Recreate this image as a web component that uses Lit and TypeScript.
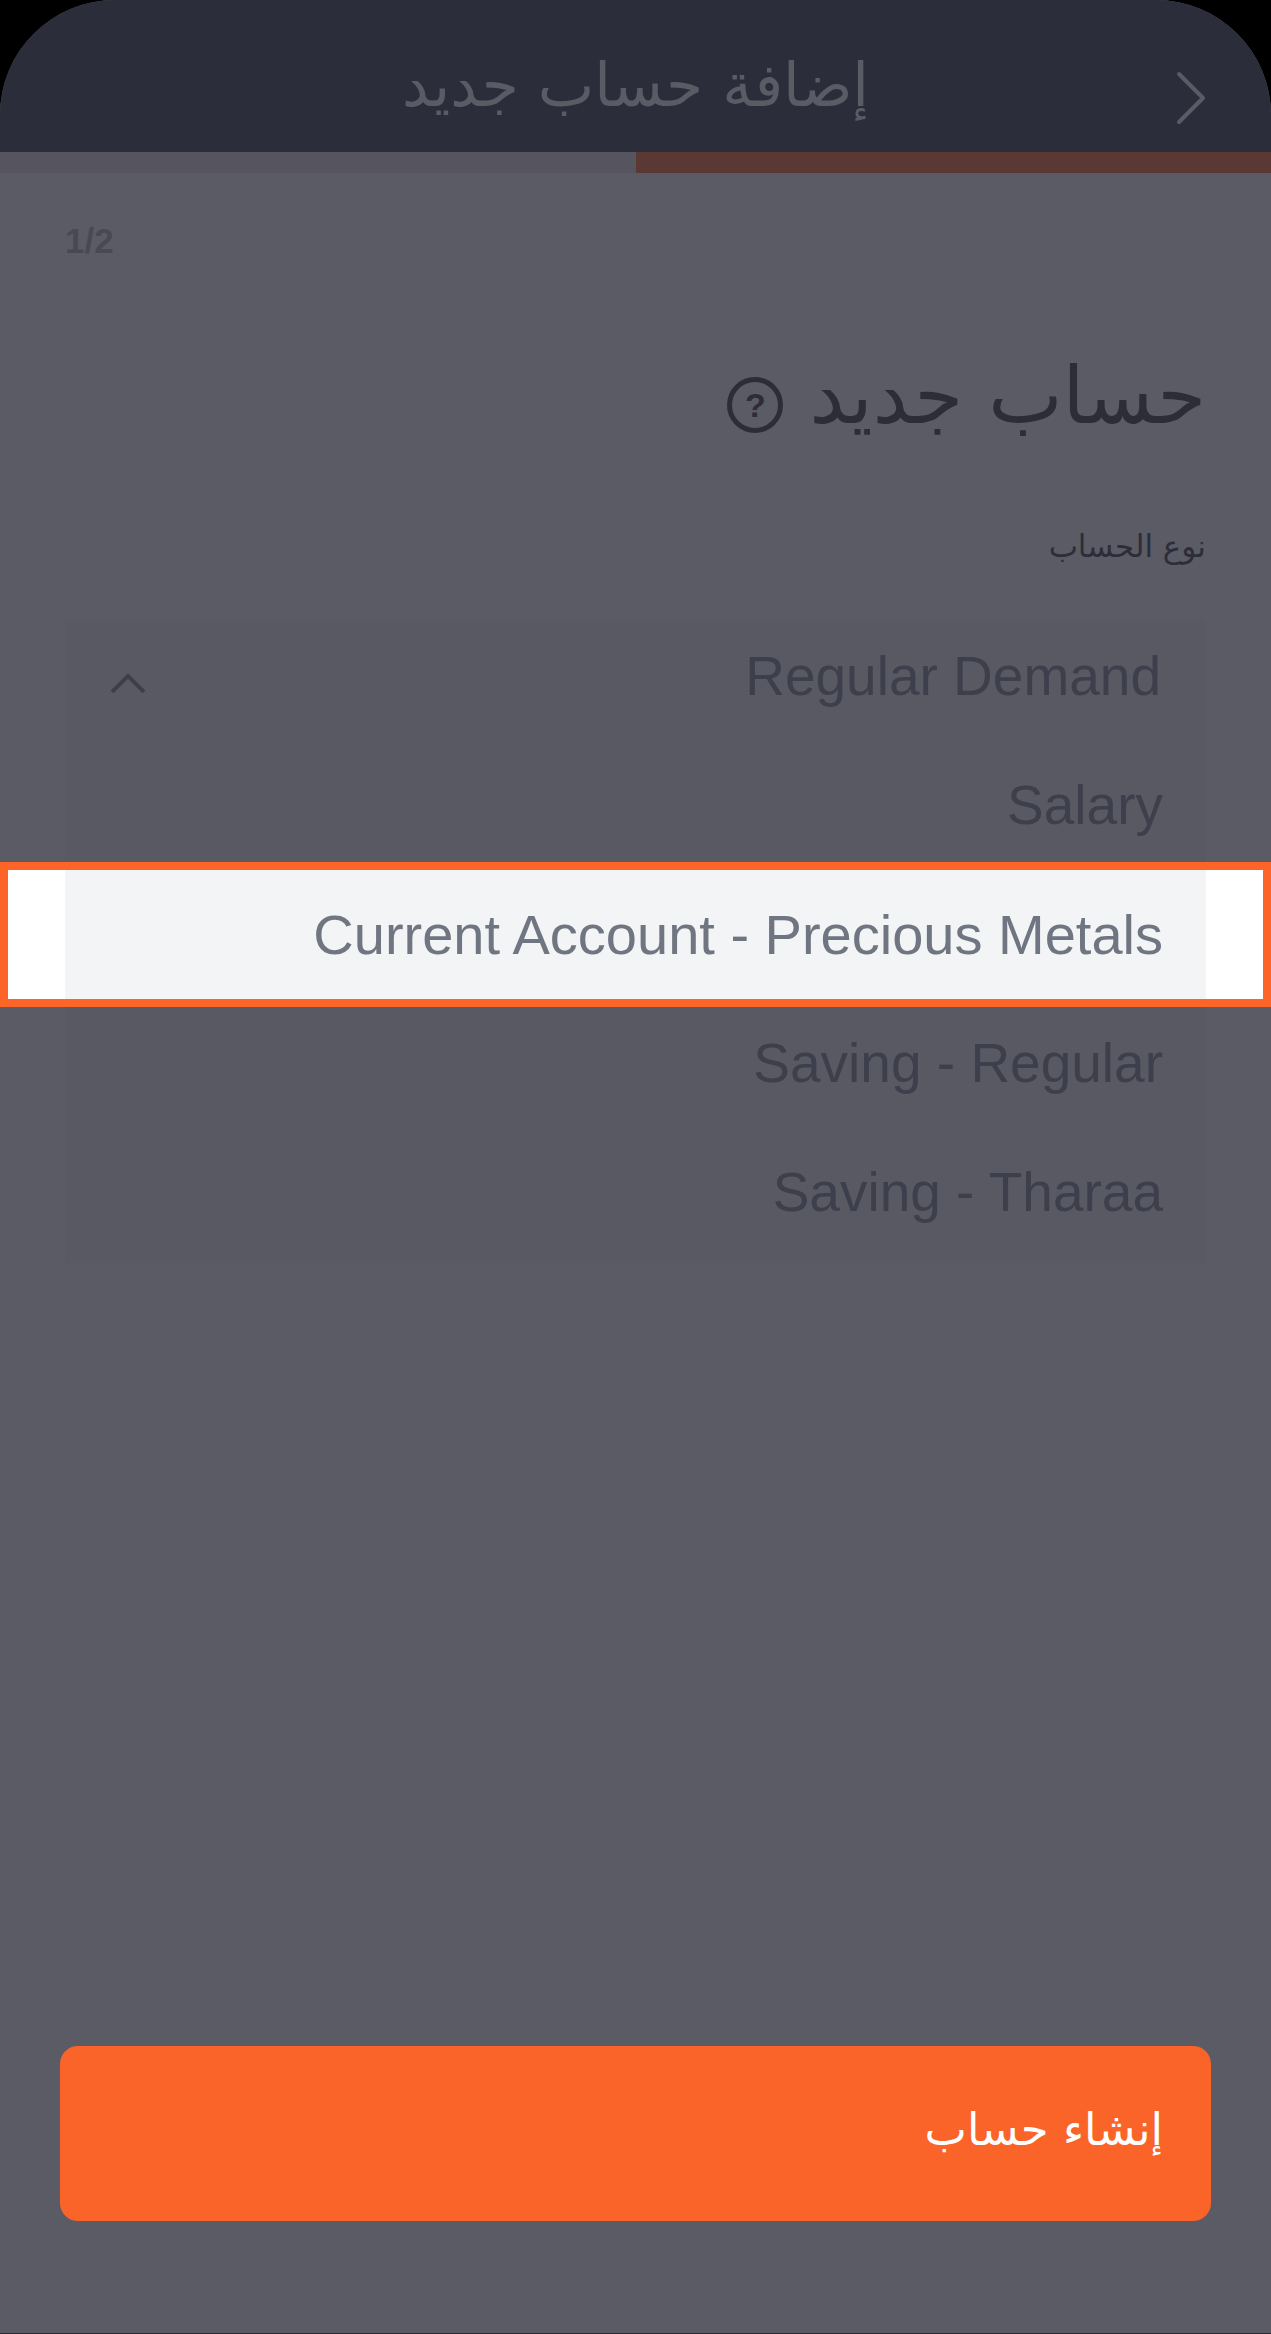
import { LitElement, html, css } from "lit";
import { customElement, state } from "lit/decorators.js";
import { classMap } from "lit/directives/class-map.js";

const ACCOUNT_TYPES = [
  "Salary",
  "Current Account - Precious Metals",
  "Saving - Regular",
  "Saving - Tharaa",
];

@customElement("account-type-picker")
export class AccountTypePicker extends LitElement {
  static styles = css`
    :host {
      display: block;
    }
    .label {
      display: block;
      margin-bottom: 50px;
      font-size: 31px;
      line-height: 48px;
      color: #2d2d3a;
    }
    .box {
      display: flex;
      flex-direction: column;
      padding-bottom: 6px;
      background: #595964;
      direction: ltr;
    }
    button {
      display: block;
      width: 100%;
      margin: 0;
      padding: 0;
      border: 0;
      background: none;
      font: 55px/129px "Liberation Sans", Arial, sans-serif;
      color: #3e3f4c;
      text-align: right;
      cursor: pointer;
    }
    .text {
      display: block;
      padding: 0 43px;
    }
    .current {
      display: flex;
      justify-content: space-between;
      align-items: center;
      padding: 0 45px 8px;
      line-height: 113px;
    }
    .chevron {
      width: 36px;
      height: 20px;
      margin-top: 12px;
    }
    .highlight {
      position: relative;
      isolation: isolate;
      font-size: 56px;
      color: #6f7681;
    }
    .highlight::before {
      content: "";
      position: absolute;
      inset: -8px -65px;
      z-index: -1;
      border: 8px solid #fc6428;
      background: #ffffff;
    }
    .highlight .text {
      background: #f2f4f5;
    }
  `;

  @state() private chosen = ACCOUNT_TYPES[1];

  render() {
    return html`
      <span class="label" id="type-label">نوع الحساب</span>
      <div class="box">
        <button
          class="current"
          type="button"
          aria-haspopup="listbox"
          aria-expanded="true"
          aria-labelledby="type-label type-current"
        >
          <svg class="chevron" viewBox="0 0 36 20" aria-hidden="true">
            <path d="M2 19 18 3 34 19" fill="none" stroke="currentColor" stroke-width="4" />
          </svg>
          <span id="type-current">Regular Demand</span>
        </button>
        <div role="listbox" aria-labelledby="type-label">
          ${ACCOUNT_TYPES.map(
            (name) => html`
              <button
                type="button"
                role="option"
                aria-selected=${name === this.chosen}
                class=${classMap({ highlight: name === this.chosen })}
                @click=${() => (this.chosen = name)}
              >
                <span class="text">${name}</span>
              </button>
            `
          )}
        </div>
      </div>
    `;
  }
}

@customElement("app-root")
export class AppRoot extends LitElement {
  static styles = css`
    :host {
      display: block;
      background: #000000;
      font-family: "DejaVu Sans", "Noto Sans", sans-serif;
    }
    .screen {
      box-sizing: border-box;
      display: flex;
      flex-direction: column;
      min-height: 100vh;
      overflow: hidden;
      border-radius: 115px 115px 0 0;
      border-bottom: 1px solid #2d2935;
      background: #5b5b66;
    }
    .bar {
      display: grid;
      grid-template-columns: 1fr auto 1fr;
      align-items: center;
      height: 152px;
      padding: 0 65px;
      box-sizing: border-box;
      background: #2c2d3a;
      color: #5b5b66;
    }
    .bar h1 {
      grid-column: 2;
      margin: 0;
      padding-top: 18px;
      font-size: 60px;
      line-height: 80px;
      font-weight: 400;
    }
    .back {
      grid-column: 1;
      grid-row: 1;
      justify-self: start;
      display: flex;
      margin: 0;
      padding: 44px 0 0;
      border: 0;
      background: none;
      color: inherit;
      cursor: pointer;
    }
    .back svg {
      width: 30px;
      height: 54px;
    }
    .progress {
      display: flex;
      height: 21px;
      background: #55545f;
    }
    .done {
      width: 50%;
      background: #5a3935;
    }
    .step {
      margin: 0;
      padding: 48px 65px 0;
      font: bold 35px/40px "Liberation Sans", Arial, sans-serif;
      color: #494854;
      direction: ltr;
      text-align: left;
    }
    .content {
      padding: 79px 65px 0;
    }
    .heading {
      display: flex;
      align-items: center;
      gap: 26px;
      margin-bottom: 62px;
      color: #2d2d3a;
    }
    .heading h2 {
      margin: 0;
      padding-bottom: 8px;
      font-size: 79px;
      line-height: 112px;
      font-weight: 400;
    }
    .help {
      display: flex;
      align-items: center;
      justify-content: center;
      box-sizing: border-box;
      width: 56px;
      height: 56px;
      margin: 10px 0 0;
      padding: 0;
      border: 5px solid currentColor;
      border-radius: 50%;
      background: none;
      color: inherit;
      font: bold 34px/40px "Liberation Sans", Arial, sans-serif;
      cursor: pointer;
    }
    .footer {
      margin-top: auto;
      padding: 60px 60px 112px;
    }
    .submit {
      display: block;
      width: 100%;
      margin: 0;
      padding: 0 48px 8px;
      border: 0;
      border-radius: 18px;
      background: #fa6428;
      color: #ffffff;
      font-family: inherit;
      font-size: 45px;
      line-height: 167px;
      text-align: right;
      cursor: pointer;
    }
  `;

  render() {
    return html`
      <main class="screen" dir="rtl" lang="ar">
        <header class="bar">
          <button class="back" type="button" aria-label="رجوع">
            <svg viewBox="0 0 30 54" aria-hidden="true">
              <path
                d="M3 3 27 27 3 51"
                fill="none"
                stroke="currentColor"
                stroke-width="4"
                stroke-linecap="round"
                stroke-linejoin="round"
              />
            </svg>
          </button>
          <h1>إضافة حساب جديد</h1>
        </header>
        <div class="progress" role="progressbar" aria-valuemin="0" aria-valuemax="2" aria-valuenow="1">
          <div class="done"></div>
        </div>
        <p class="step">1/2</p>
        <section class="content">
          <div class="heading">
            <h2>حساب جديد</h2>
            <button class="help" type="button">?</button>
          </div>
          <account-type-picker></account-type-picker>
        </section>
        <footer class="footer">
          <button class="submit" type="button">إنشاء حساب</button>
        </footer>
      </main>
    `;
  }
}
